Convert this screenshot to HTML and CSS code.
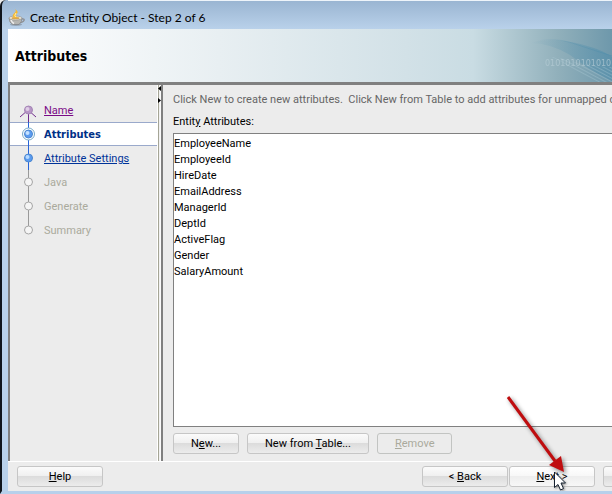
FILE: index.html
```
<!DOCTYPE html>
<html lang="en">
<head>
<meta charset="utf-8">
<title>Create Entity Object - Step 2 of 6</title>
<link rel="stylesheet" href="styles.css">
</head>
<body>
<div class="window">
  <header class="titlebar">
    <svg class="cup" viewBox="0 0 18 18" aria-hidden="true">
      <ellipse cx="8" cy="15.500" rx="6" ry="1.500" fill="#7d8793" opacity=".6"/>
      <path d="M13 10q4-.5 3 1.500-1 2-4.500 2" fill="none" stroke="#8d8f92" stroke-width="1.300"/>
      <path d="M1 9h13q0 4-3 6.500H5Q1 14 1 9z" fill="#b5b5b2" stroke="#77797c" stroke-width=".6"/>
      <path d="M3 11q1 2.500 3 3.500" fill="none" stroke="#eee" stroke-width="1.500"/>
      <ellipse cx="7.500" cy="9" rx="6.500" ry="2" fill="#eee9dc" stroke="#8b8b88" stroke-width=".6"/>
      <ellipse cx="7.500" cy="9.200" rx="4" ry="1.100" fill="#d9a650"/>
      <path d="M7 9Q3 7 6 4.500T7 0q4 2.500 2 4.500T9 9z" fill="#f8b92e"/>
      <path d="M7.500 8Q6 6.500 8 4" fill="none" stroke="#fff3b5"/>
    </svg>
    <span>Create Entity Object - Step 2 of 6</span>
  </header>
  <div class="banner">
    <h1>Attributes</h1>
    <svg class="waves" viewBox="0 0 92 53" aria-hidden="true">
      <defs>
        <pattern id="mesh" width="3" height="3" patternUnits="userSpaceOnUse" patternTransform="rotate(28)">
          <path d="M0 .5h3" stroke="#b4d0db" stroke-width=".8"/>
        </pattern>
        <linearGradient id="swell">
          <stop offset="0" stop-color="#4c8cab" stop-opacity="0"/>
          <stop offset="1" stop-color="#4c8cab" stop-opacity=".5"/>
        </linearGradient>
      </defs>
      <path d="M10 14Q30 8 56 14T92 28V52Q72 43 50 26 30 14 10 14z" fill="url(#swell)"/>
      <path d="M30 28Q38 30 48 37T78 53H92V38Q70 38 50 32 40 28 30 28z" fill="url(#mesh)" opacity=".4"/>
      <path d="M16 12Q34 8 52 14T92 27" fill="none" stroke="url(#swell)"/>
      <text x="25" y="37">0101010101010</text>
    </svg>
  </div>
  <div class="panes">
    <nav class="steps" aria-label="Wizard steps">
      <ol>
        <li class="step visited">
          <svg viewBox="0 0 24 24" aria-hidden="true"><path d="M4 19l8-7 8 7M12.500 12v12" fill="none" stroke="#702c8c"/><circle cx="12.500" cy="12" r="4" fill="#b795c6" stroke="#a486b5"/><circle cx="11.500" cy="11" r="2" fill="#dfcde6"/></svg>
          <a href="#name">Name</a>
        </li>
        <li class="step current" aria-current="step">
          <svg viewBox="0 0 24 24" aria-hidden="true"><path d="M12.500 0v24" stroke="#2864d8"/><circle cx="12.500" cy="12" r="6" fill="#fff" stroke="#77aac8"/><circle cx="12.500" cy="12" r="4" fill="#5b9cf0" stroke="#4b86cf"/><circle cx="11.500" cy="11" r="2" fill="#c4e1ff"/></svg>
          <span>Attributes</span>
        </li>
        <li class="step">
          <svg viewBox="0 0 24 24" aria-hidden="true"><path d="M12.500 0v24" stroke="#2864d8"/><circle cx="12.500" cy="12" r="4" fill="#5b9cf0" stroke="#4b86cf"/><circle cx="11.500" cy="11" r="2" fill="#b9dbff"/></svg>
          <a href="#settings">Attribute Settings</a>
        </li>
        <li class="step pending">
          <svg viewBox="0 0 24 24" aria-hidden="true"><path d="M12.500 0v24" stroke="#999"/><circle cx="12.500" cy="12" r="4" fill="#f5f5f5" stroke="#a5a5a5"/></svg>
          <span>Java</span>
        </li>
        <li class="step pending">
          <svg viewBox="0 0 24 24" aria-hidden="true"><path d="M12.500 0v24" stroke="#999"/><circle cx="12.500" cy="12" r="4" fill="#f5f5f5" stroke="#a5a5a5"/></svg>
          <span>Generate</span>
        </li>
        <li class="step pending">
          <svg viewBox="0 0 24 24" aria-hidden="true"><path d="M12.500 0v12" stroke="#999"/><circle cx="12.500" cy="12" r="4" fill="#f5f5f5" stroke="#a5a5a5"/></svg>
          <span>Summary</span>
        </li>
      </ol>
    </nav>
    <div class="splitter">
      <svg viewBox="0 0 3 20" aria-hidden="true"><path d="M3 1v5L0 3.500zM0 13v5l3-2.500z"/></svg>
    </div>
    <main class="content">
      <p class="hint">Click New to create new attributes.&nbsp; Click New from Table to add attributes for unmapped co</p>
      <label for="attributes">Entit<u>y</u> Attributes:</label>
      <select id="attributes" class="list" multiple>
        <option>EmployeeName</option>
        <option>EmployeeId</option>
        <option>HireDate</option>
        <option>EmailAddress</option>
        <option>ManagerId</option>
        <option>DeptId</option>
        <option>ActiveFlag</option>
        <option>Gender</option>
        <option>SalaryAmount</option>
      </select>
      <div class="actions">
        <button type="button">N<u>e</u>w...</button>
        <button type="button">New from <u>T</u>able...</button>
        <button type="button" disabled><u>R</u>emove</button>
      </div>
    </main>
  </div>
  <footer class="footer">
    <button type="button" class="wide"><u>H</u>elp</button>
    <div class="paging">
      <button type="button" class="wide">&lt; <u>B</u>ack</button>
      <button type="button" class="wide hover"><u>N</u>ext &gt;</button>
      <button type="button" class="wide finish" aria-label="Finish"></button>
    </div>
  </footer>
  <svg class="pointer" viewBox="0 0 72 102" aria-hidden="true">
    <g class="arrow"><path d="M8 5l47 64" stroke="#bf0d0f" stroke-width="3"/><path d="M49 73l12-9 3 16z" fill="#c00d0f"/></g>
    <path class="cursor" d="M54.500 80v15.500l3.500-3 2.500 5.500 3-1.500-2.500-5.500h4.500z" fill="#fff" stroke="#14202f"/>
  </svg>
</div>
</body>
</html>
```
FILE: styles.css
```
* { box-sizing: border-box; }

body {
  margin: 0;
  overflow: hidden;
  background: #ececec;
  color: #000;
  font: 11px/16px Roboto, "Open Sans", sans-serif;
}

.window {
  position: relative;
  display: flex;
  flex-direction: column;
  height: 100vh;
  overflow: hidden;
  padding-left: 6px;
  border-left: 2px solid #10151c;
  border-bottom: 3px solid #b7d0eb;
  border-top-left-radius: 6px;
  background: linear-gradient(#99b4d1, #b9d1ea 29px);
}

.titlebar {
  display: flex;
  align-items: center;
  gap: 4px;
  height: 29px;
  padding-top: 6px;
  border-top: 1px solid #eef4fa;
  font: 12px/16px Lato, "Open Sans", sans-serif;
  white-space: nowrap;
}

.cup { width: 18px; height: 18px; }

.banner {
  display: flex;
  justify-content: space-between;
  align-items: center;
  height: 56px;
  border-bottom: 3px solid #808080;
  padding-left: 7px;
  background: linear-gradient(90deg, #fff 0, #e8eff2 35%, #d2e1e7 66%, #c9dce3 77%, #91b0bb 91%, #6e98ab 100%);
}

.banner h1 {
  margin: 0;
  font: bold 14px/20px "DejaVu Sans Condensed", sans-serif;
}

.waves { width: 92px; height: 53px; }
.waves text { fill: #b7cdd6; font: 8px "DejaVu Sans", sans-serif; opacity: .7; }

.panes {
  display: flex;
  flex: 1;
  min-height: 0;
  background: #ececec;
}

.steps {
  flex: 0 0 149px;
  border-left: 2px solid #808080;
}

.steps ol {
  margin: 0;
  padding: 13px 0 0;
  list-style: none;
}

.step {
  display: flex;
  align-items: center;
  gap: 4px;
  height: 24px;
  padding-left: 6px;
  color: #003399;
  line-height: 16px;
}

.step svg { flex: none; width: 24px; height: 24px; }
.step a, .step span { padding-top: 2px; }
.step a { color: inherit; }
.step.visited { color: #7a0a86; }
.step.pending { color: #aaaa9c; }

.step.current {
  border: solid #9aa9cb;
  border-width: 1px 0;
  background: #fff;
  color: #003087;
  font-family: "DejaVu Sans Condensed", sans-serif;
  font-weight: bold;
}

.splitter {
  flex: 0 0 6px;
  border-left: 1px solid #fff;
  border-right: 2px solid #808080;
  background: linear-gradient(90deg, #a5a596 1px, #ececec 1px, #fff);
}

.splitter svg { display: block; width: 3px; height: 20px; }

.content {
  display: flex;
  flex: 1;
  flex-direction: column;
  min-width: 0;
  padding: 7px 0 7px 10px;
}

.hint {
  margin: 0 0 6px;
  color: #666;
  white-space: nowrap;
}

.list {
  flex: 1;
  min-height: 0;
  margin: 3px -4px 6px 0;
  padding: 3px 0;
  border: 1px solid #808080;
  border-radius: 0;
  outline: 0;
  background: #fff;
  color: #000;
  font: inherit;
  overflow: hidden;
}

.list option {
  min-height: 16px;
  padding: 0;
  line-height: 16px;
}

.actions { display: flex; gap: 8px; }

button {
  height: 21px;
  padding: 1px 17px 0;
  border: 1px solid #c6c6c6;
  border-radius: 3px;
  background: linear-gradient(#fbfbfb 0, #f0f0f0 45%, #dcdcdc 50%, #ececec 100%);
  color: #000;
  font: inherit;
  line-height: 16px;
  white-space: nowrap;
}

button:disabled {
  border-color: #c2c4c2;
  background: #ececec;
  color: #aaaa9c;
}

.footer {
  display: flex;
  justify-content: space-between;
  padding: 4px 0 4px 9px;
  border-top: 1px solid #fff;
  background: #ececec;
}

.wide { width: 86px; padding: 1px 0 0; }
.hover { background: linear-gradient(#fff 0, #f8f8f8 45%, #eee 50%, #f7f7f7 100%); }

.paging {
  display: flex;
  gap: 1px;
  margin-right: -77px;
}

.finish { margin-left: 7px; }

.pointer {
  position: absolute;
  right: 40px;
  bottom: -3px;
  width: 72px;
  height: 102px;
  pointer-events: none;
}

.arrow { filter: drop-shadow(2px 2px 2px #0007); }
.cursor { filter: drop-shadow(1px 1px 1px #0006); }
```
